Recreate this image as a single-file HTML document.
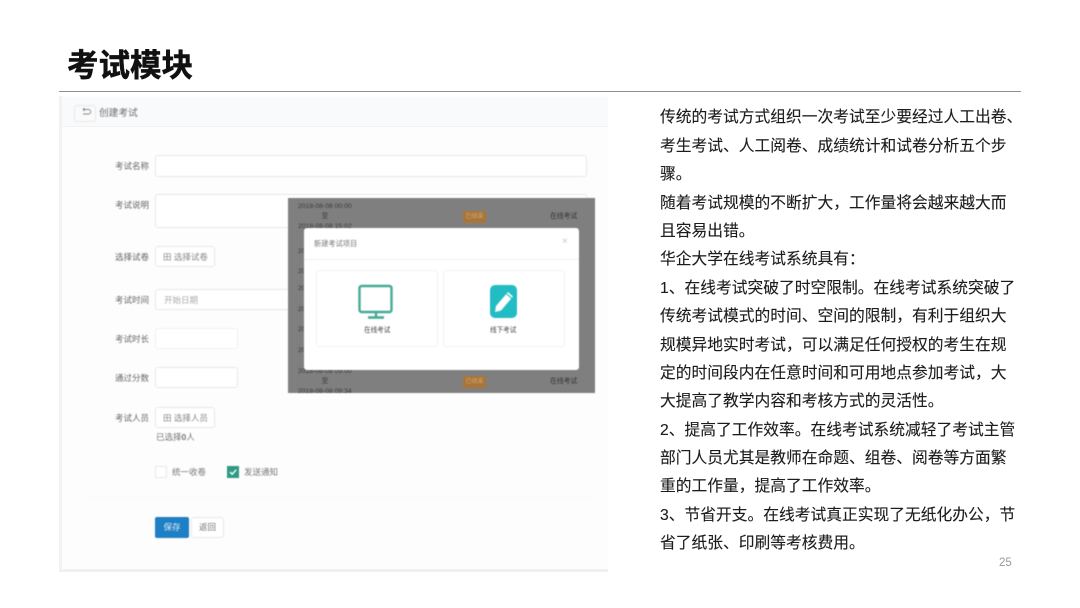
<!DOCTYPE html>
<html lang="zh">
<head>
<meta charset="utf-8">
<style>
html,body{margin:0;padding:0;background:#fff}
body{width:1080px;height:608px;position:relative;overflow:hidden;font-family:"Liberation Sans","Noto Sans CJK SC",sans-serif}
.a{position:absolute;white-space:nowrap}
#title{left:67px;top:44px;font-size:31.5px;line-height:42px;font-weight:700;color:#111;-webkit-text-stroke:.5px #111;filter:blur(.35px)}
#rule{left:59px;top:91px;width:962px;height:1px;background:#8f8f8f}
#panel{left:59px;top:96px;width:549px;height:476px;background:#fdfdfd;border-left:3px solid #f1f2f3;border-bottom:3px solid #eff0f0;box-sizing:border-box}
#head{left:62px;top:97px;width:546px;height:29px;background:#f9fafb;border-bottom:1px solid #f1f2f3;box-sizing:content-box}
.f{filter:blur(.55px)}
.l{font-size:8.5px;line-height:12px;color:#666}
.b{position:absolute;box-sizing:border-box;background:#fff;border:1px solid #e8e8e8;border-radius:3px}
#mask{left:288px;top:198px;width:307px;height:195px;background:#7f7f7f}
#modal{left:304px;top:228px;width:275px;height:142px;background:#fff;border-radius:3px}
.m{font-size:6.6px;line-height:10px;color:#444}
.r{font-size:6.8px;line-height:10px;color:#333}
.d{left:298px;font-size:6.8px;line-height:10px;color:#3a3a3a}
.t{left:660px;font-size:15.75px;line-height:28px;color:#1c1c1c;-webkit-text-stroke:.12px #1c1c1c;filter:blur(.3px)}
</style>
</head>
<body>
<div class="a" id="title">考试模块</div>
<div class="a" id="rule"></div>
<div class="a" id="panel"></div>
<div class="a" id="head"></div>

<div class="f">
<div class="b" style="left:74px;top:105px;width:22px;height:17px;background:#fafafa"></div>
<svg class="a" style="left:80px;top:107px" width="12" height="10" viewBox="0 0 12 10"><path d="M3 2.5H8.5A2.2 2.2 0 0 1 8.5 7H3M3 2.5L4.6 1M3 2.5L4.6 4" fill="none" stroke="#888" stroke-width=".9"/></svg>
<div class="a" style="left:99px;top:107px;font-size:9.7px;line-height:14px;color:#707070">创建考试</div>

<div class="a l" style="left:115px;top:160px">考试名称</div>
<div class="b" style="left:155px;top:155px;width:432px;height:22px"></div>
<div class="a l" style="left:115px;top:199px">考试说明</div>
<div class="b" style="left:155px;top:194px;width:432px;height:34px"></div>
<div class="a l" style="left:115px;top:251px">选择试卷</div>
<div class="b" style="left:155px;top:246px;width:60px;height:21px"></div>
<div class="a l" style="left:163px;top:251px;color:#888">田 选择试卷</div>
<div class="a l" style="left:115px;top:294px">考试时间</div>
<div class="b" style="left:155px;top:289px;width:140px;height:21px"></div>
<div class="a l" style="left:164px;top:294px;color:#aaa">开始日期</div>
<div class="a l" style="left:115px;top:333px">考试时长</div>
<div class="b" style="left:155px;top:328px;width:83px;height:21px;border-color:#f0f0f0"></div>
<div class="a l" style="left:115px;top:372px">通过分数</div>
<div class="b" style="left:155px;top:367px;width:83px;height:21px"></div>
<div class="a l" style="left:115px;top:412px">考试人员</div>
<div class="b" style="left:155px;top:407px;width:60px;height:21px"></div>
<div class="a l" style="left:163px;top:412px;color:#888">田 选择人员</div>
<div class="a l" style="left:156px;top:431px;color:#777">已选择<b>0</b>人</div>
<div class="b" style="left:155px;top:466px;width:12px;height:12px;border-radius:1px"></div>
<div class="a l" style="left:172px;top:466px;color:#777">统一收卷</div>
<div class="a" style="left:227px;top:466px;width:12px;height:12px;background:#2f9a82"></div>
<svg class="a" style="left:227px;top:466px" width="12" height="12" viewBox="0 0 12 12"><path d="M3 6L5.2 8.2L9.2 3.8" fill="none" stroke="#fff" stroke-width="1.4"/></svg>
<div class="a l" style="left:244px;top:466px;color:#777">发送通知</div>
<div class="a" style="left:85px;top:497px;width:510px;height:1px;background:#f8f8f8"></div>
<div class="a" style="left:155px;top:517px;width:34px;height:21px;background:#1f7fc4;border-radius:2px;color:#d8ebf7;font-size:8.5px;line-height:21px;text-align:center">保存</div>
<div class="b" style="left:191px;top:517px;width:33px;height:21px;color:#777;font-size:8.5px;line-height:19px;text-align:center">返回</div>

<div class="a" id="mask"></div>
<div class="a d" style="top:202px;text-align:center">2018-08-08 00:00<br>至<br>2018-08-08 15:02</div>
<div class="a" style="left:463px;top:211px;width:23px;height:12px;background:#a87538;border-radius:1px;color:#cfa878;font-size:6px;line-height:12px;text-align:center">已结束</div>
<div class="a r" style="left:550px;top:212px">在线考试</div>
<div class="a d" style="top:247px">20</div>
<div class="a d" style="top:267px">20</div>
<div class="a d" style="top:284px">20</div>
<div class="a d" style="top:305px">20</div>
<div class="a d" style="top:325px">20</div>
<div class="a d" style="top:346px">20</div>
<div class="a d" style="top:367px;text-align:center">2018-08-08 09:00<br>至<br>2018-08-08 09:34</div>
<div class="a" style="left:463px;top:376px;width:23px;height:12px;background:#a87538;border-radius:1px;color:#cfa878;font-size:6px;line-height:12px;text-align:center">已结束</div>
<div class="a r" style="left:550px;top:377px">在线考试</div>

<div class="a" id="modal"></div>
<div class="a" style="left:314px;top:238px;font-size:7.2px;line-height:12px;color:#777">新建考试项目</div>
<div class="a" style="left:562px;top:236px;font-size:10px;line-height:12px;color:#c4c4c4">×</div>
<div class="a" style="left:304px;top:259px;width:275px;height:1px;background:#f0f0f0"></div>
<div class="b" style="left:316px;top:270px;width:122px;height:77px;border-color:#f2f2f2"></div>
<div class="b" style="left:443px;top:270px;width:122px;height:77px;border-color:#f2f2f2"></div>
<svg class="a" style="left:358px;top:284px" width="36" height="36" viewBox="0 0 36 36"><rect x="1.5" y="2" width="32" height="26" rx="2" fill="#fff" stroke="#45ab96" stroke-width="2.4"/><path d="M18 28V33" stroke="#45ab96" stroke-width="2.4"/><path d="M10 33.5H26" stroke="#45ab96" stroke-width="2.6"/></svg>
<svg class="a" style="left:489px;top:284px" width="30" height="35" viewBox="0 0 30 35"><rect x="1" y="1" width="27" height="33" rx="5" fill="#22bdc4"/><path d="M7 22L19 8L24 12.5L12 26.5L6 28Z" fill="#fff"/><path d="M17.6 9.8L22.6 14.2" stroke="#22bdc4" stroke-width="1.1"/></svg>
<div class="a m" style="left:364px;top:326px">在线考试</div>
<div class="a m" style="left:490px;top:326px">线下考试</div>
</div>

<div class="a t" style="top:104px">传统的考试方式组织一次考试至少要经过人工出卷、</div>
<div class="a t" style="top:133px">考生考试、人工阅卷、成绩统计和试卷分析五个步</div>
<div class="a t" style="top:161px">骤。</div>
<div class="a t" style="top:190px">随着考试规模的不断扩大，工作量将会越来越大而</div>
<div class="a t" style="top:218px">且容易出错。</div>
<div class="a t" style="top:246px">华企大学在线考试系统具有：</div>
<div class="a t" style="top:275px">1、在线考试突破了时空限制。在线考试系统突破了</div>
<div class="a t" style="top:303px">传统考试模式的时间、空间的限制，有利于组织大</div>
<div class="a t" style="top:332px">规模异地实时考试，可以满足任何授权的考生在规</div>
<div class="a t" style="top:360px">定的时间段内在任意时间和可用地点参加考试，大</div>
<div class="a t" style="top:388px">大提高了教学内容和考核方式的灵活性。</div>
<div class="a t" style="top:417px">2、提高了工作效率。在线考试系统减轻了考试主管</div>
<div class="a t" style="top:445px">部门人员尤其是教师在命题、组卷、阅卷等方面繁</div>
<div class="a t" style="top:473px">重的工作量，提高了工作效率。</div>
<div class="a t" style="top:502px">3、节省开支。在线考试真正实现了无纸化办公，节</div>
<div class="a t" style="top:530px">省了纸张、印刷等考核费用。</div>
<div class="a" style="left:999px;top:556px;font-size:11.5px;line-height:14px;color:#999">25</div>
</body>
</html>
